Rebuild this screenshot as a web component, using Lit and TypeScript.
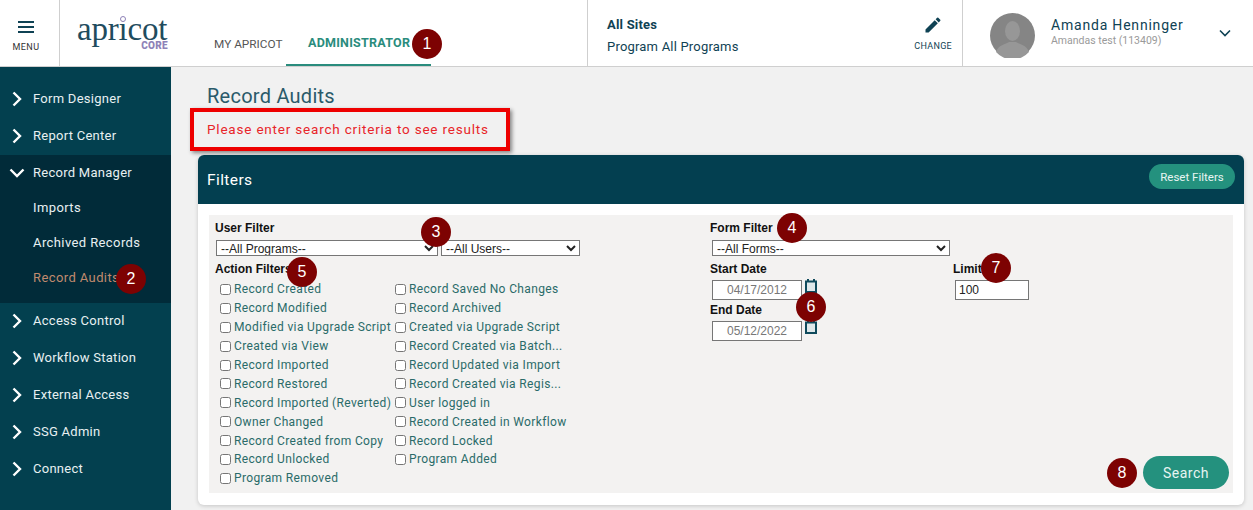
import { css, html, LitElement } from "lit";
import { customElement } from "lit/decorators.js";

const col1 = ["Record Created", "Record Modified", "Modified via Upgrade Script", "Created via View", "Record Imported", "Record Restored", "Record Imported (Reverted)", "Owner Changed", "Record Created from Copy", "Record Unlocked", "Program Removed"];
const col2 = ["Record Saved No Changes", "Record Archived", "Created via Upgrade Script", "Record Created via Batch...", "Record Updated via Import", "Record Created via Regis...", "User logged in", "Record Created in Workflow", "Record Locked", "Program Added"];

const chevronRight = html`<svg width="12" height="16" viewBox="0 0 12 16"><path d="M2.5 1.5 9 8l-6.500 6.500" fill="none" stroke="#fff" stroke-width="2.400"/></svg>`;
const chevronDown = html`<svg width="16" height="12" viewBox="0 0 16 12"><path d="M1.500 2.500 8 9l6.500-6.500" fill="none" stroke="#fff" stroke-width="2.400"/></svg>`;
const calendar = html`<svg class="cal" width="12" height="14" viewBox="0 0 12 14"><path d="M3 0v3M9 0v3" stroke="#0f4a5c" stroke-width="2"/><rect x="1" y="2.500" width="10" height="10.500" fill="#dfe8ea" stroke="#0f4a5c" stroke-width="2"/></svg>`;

@customElement("app-root")
export class AppRoot extends LitElement {
    private navItem(label: string) {
        return html`<div class="nav-item">${chevronRight}<span>${label}</span></div>`;
    }

    private check(label: string) {
        return html`<label class="check"><input type="checkbox" /><span>${label}</span></label>`;
    }

    protected override render() {
        return html`
            <header class="top">
                <div class="menu">
                    <svg width="16" height="12" viewBox="0 0 16 12"><path d="M0 1h16M0 6h16M0 11h16" stroke="#0f4254" stroke-width="2"/></svg>
                    <span>MENU</span>
                </div>
                <div class="logo">
                    <span class="logo-name">apricot</span>
                    <span class="logo-dot"></span>
                    <span class="logo-core">CORE</span>
                </div>
                <nav class="tabs">
                    <div class="tab">MY APRICOT</div>
                    <div class="tab active">ADMINISTRATOR</div>
                </nav>
                <div class="sites">
                    <div class="sites-text">
                        <b>All Sites</b>
                        <span>Program All Programs</span>
                    </div>
                    <div class="change">
                        <svg width="20" height="20" viewBox="0 0 24 24"><path fill="#0f4254" d="M3 17.250V21h3.750L17.810 9.940l-3.750-3.750L3 17.250zM20.710 7.040a1 1 0 0 0 0-1.410l-2.340-2.340a1 1 0 0 0-1.410 0l-1.830 1.830 3.750 3.750 1.830-1.830z"/></svg>
                        <span>CHANGE</span>
                    </div>
                </div>
                <div class="user">
                    <svg class="avatar" width="45" height="45" viewBox="0 0 45 45">
                        <circle cx="22.500" cy="22.500" r="22.500" fill="#858585"/>
                        <ellipse cx="22.500" cy="18" rx="7.500" ry="10" fill="#979797"/>
                        <path d="M6 39c2-7 10-8 13-10h7c3 2 11 3 13 10a22 22 0 0 1-33 0z" fill="#979797"/>
                    </svg>
                    <div class="user-text">
                        <div class="user-name">Amanda Henninger</div>
                        <div class="user-sub">Amandas test (113409)</div>
                    </div>
                    <svg class="user-chev" width="12" height="8" viewBox="0 0 12 8"><path d="M1 1.500 6 6.500l5-5" fill="none" stroke="#0f4254" stroke-width="1.600"/></svg>
                </div>
            </header>
            <div class="body">
                <aside class="side">
                    ${this.navItem("Form Designer")}
                    ${this.navItem("Report Center")}
                    <div class="group">
                        <div class="nav-item open">${chevronDown}<span>Record Manager</span></div>
                        <div class="sub">Imports</div>
                        <div class="sub">Archived Records</div>
                        <div class="sub current">Record Audits</div>
                    </div>
                    ${this.navItem("Access Control")}
                    ${this.navItem("Workflow Station")}
                    ${this.navItem("External Access")}
                    ${this.navItem("SSG Admin")}
                    ${this.navItem("Connect")}
                </aside>
                <main class="main">
                    <h1>Record Audits</h1>
                    <div class="message">Please enter search criteria to see results</div>
                    <section class="card">
                        <div class="card-head">
                            <span>Filters</span>
                            <button class="reset">Reset Filters</button>
                        </div>
                        <div class="card-body">
                            <div class="panel">
                                <div class="left">
                                    <div class="lbl">User Filter</div>
                                    <div class="selects">
                                        <select class="programs"><option>--All Programs--</option></select>
                                        <select class="users"><option>--All Users--</option></select>
                                    </div>
                                    <div class="lbl action">Action Filters</div>
                                    <div class="checks">
                                        <div>${col1.map((c) => this.check(c))}</div>
                                        <div>${col2.map((c) => this.check(c))}</div>
                                    </div>
                                </div>
                                <div class="right">
                                    <div class="lbl">Form Filter</div>
                                    <select class="forms"><option>--All Forms--</option></select>
                                    <div class="dates">
                                        <div class="date-col">
                                            <div class="lbl">Start Date</div>
                                            <div class="date-row"><input class="date" value="04/17/2012" />${calendar}</div>
                                            <div class="lbl end">End Date</div>
                                            <div class="date-row"><input class="date" value="05/12/2022" />${calendar}</div>
                                        </div>
                                        <div>
                                            <div class="lbl">Limit</div>
                                            <input class="limit" value="100" />
                                        </div>
                                    </div>
                                </div>
                                <button class="search">Search</button>
                            </div>
                        </div>
                    </section>
                </main>
            </div>
            <div class="highlight"></div>
            ${[[427, 44, "1"], [131, 279, "2"], [436, 232, "3"], [792, 228, "4"], [302, 272, "5"], [811, 307, "6"], [996, 268, "7"], [1122, 473, "8"]].map(
                ([x, y, n]) => html`<div class="badge" style="left:${(x as number) - 15}px;top:${(y as number) - 15}px">${n}</div>`
            )}
        `;
    }

    static styles = css`
        :host {
            display: block;
            position: relative;
            width: 1253px;
            height: 510px;
            overflow: hidden;
            background: #f1f1f1;
            font-family: Roboto, "Liberation Sans", sans-serif;
            color: #0f4254;
        }

        * {
            box-sizing: border-box;
        }

        /* top bar */
        .top {
            display: flex;
            height: 67px;
            background: #fff;
            border-bottom: 1px solid #cfcfcf;
        }

        .menu {
            width: 60px;
            border-right: 1px solid #cfcfcf;
            display: flex;
            flex-direction: column;
            align-items: center;
            padding: 21px 7px 0 0;
            gap: 9px;
            font-size: 9px;
            letter-spacing: 0.5px;
            color: #333;
        }

        .logo {
            position: relative;
            width: 154px;
        }

        .logo-name {
            position: absolute;
            left: 17px;
            top: 17px;
            font-family: "Liberation Serif", serif;
            font-size: 33px;
            line-height: 24px;
            color: #1f4c5e;
            letter-spacing: -0.2px;
        }

        .logo-dot {
            position: absolute;
            left: 60px;
            top: 16px;
            width: 6px;
            height: 6px;
            border-radius: 50%;
            background: #fff;
            border: 1.500px solid #8e82b8;
        }

        .logo-core {
            position: absolute;
            right: 46px;
            top: 41px;
            font-size: 10px;
            line-height: 10px;
            font-weight: 900;
            letter-spacing: 0.3px;
            color: #8e82b8;
        }

        .tabs {
            width: 374px;
            display: flex;
            border-right: 1px solid #cfcfcf;
        }

        .tab {
            width: 72px;
            height: 66px;
            padding-top: 21px;
            display: flex;
            align-items: center;
            font-size: 11.800px;
            color: #555;
            white-space: nowrap;
        }

        .tab.active {
            width: 145px;
            padding-left: 22px;
            font-size: 12.500px;
            letter-spacing: 0.25px;
            font-weight: 700;
            color: #2a8c7d;
            border-bottom: 2px solid #2a8c7d;
        }

        .sites {
            width: 375px;
            display: flex;
            justify-content: space-between;
            padding: 0 10px 0 19px;
            border-right: 1px solid #cfcfcf;
        }

        .sites-text {
            display: flex;
            flex-direction: column;
            padding-top: 17px;
            gap: 7px;
            font-size: 13px;
            line-height: 15px;
            letter-spacing: 0.2px;
        }

        .sites-text b {
            font-size: 13px;
        }

        .change {
            display: flex;
            flex-direction: column;
            align-items: center;
            padding-top: 15px;
            gap: 6px;
            font-size: 9px;
            letter-spacing: 0.3px;
        }

        .user {
            flex: 1;
            display: flex;
            align-items: center;
            padding-left: 27px;
        }

        .avatar {
            flex: none;
            margin-top: 5px;
        }

        .user-text {
            margin: -4px 0 0 16px;
            width: 166px;
        }

        .user-name {
            font-size: 14px;
            line-height: 18px;
            letter-spacing: 0.8px;
        }

        .user-sub {
            font-size: 10.500px;
            line-height: 13px;
            color: #9a9a9a;
        }

        .user-chev {
            margin-left: 2px;
        }

        /* sidebar */
        .body {
            display: flex;
            height: 443px;
        }

        .side {
            width: 171px;
            flex: none;
            background: #03404f;
            padding-top: 13px;
            color: #e8f0f2;
            font-size: 13px;
            letter-spacing: 0.27px;
        }

        .nav-item {
            height: 37px;
            display: flex;
            align-items: center;
            padding-left: 9px;
        }

        .nav-item svg {
            width: 16px;
            flex: none;
        }

        .nav-item span {
            margin-left: 8px;
        }

        .group {
            background: #012b39;
            height: 148px;
            margin: 1px 0 -1px;
        }

        .group .nav-item {
            height: 35px;
        }

        .sub {
            height: 35px;
            line-height: 35px;
            padding-left: 33px;
            letter-spacing: 0.4px;
        }

        .sub.current {
            color: #c08a6e;
        }

        /* main */
        .main {
            flex: 1;
            padding: 17px 9px 0 27px;
        }

        h1 {
            margin: 0 0 0 9px;
            font-size: 20px;
            line-height: 24px;
            font-weight: 400;
            letter-spacing: 0.25px;
            color: #2a5a6a;
        }

        .message {
            margin: 11px 0 0 9px;
            font-size: 13.500px;
            line-height: 20px;
            letter-spacing: 0.8px;
            color: #e8252a;
        }

        .card {
            margin-top: 16px;
            height: 350px;
            background: #fff;
            border-radius: 6px;
            box-shadow: 0 1px 4px rgba(0, 0, 0, 0.18);
            overflow: hidden;
        }

        .card-head {
            height: 49px;
            background: #033f50;
            display: flex;
            align-items: center;
            justify-content: space-between;
            padding: 0 9px;
            color: #fff;
            font-size: 15.500px;
            letter-spacing: 0.4px;
        }

        .reset {
            width: 86px;
            height: 25px;
            margin-top: -6px;
            border: none;
            border-radius: 13px;
            background: #24917e;
            color: #e8f5f2;
            font: inherit;
            font-size: 11.500px;
            letter-spacing: 0;
            padding: 0;
        }

        .card-body {
            padding: 11px 11px 0;
        }

        .panel {
            position: relative;
            height: 278px;
            background: #f3f2f1;
            display: flex;
            padding-top: 6px;
        }

        .left {
            width: 501px;
            flex: none;
            padding-left: 6px;
        }

        .lbl {
            font-family: "Liberation Sans", sans-serif;
            font-weight: 700;
            font-size: 12px;
            line-height: 14px;
            color: #111;
        }

        select,
        input.date,
        input.limit {
            font-family: "Liberation Sans", sans-serif;
            font-size: 12px;
            background: #fff;
            border: 1px solid #767676;
            border-radius: 0;
            color: #222;
            outline: none;
        }

        select {
            display: block;
            height: 16px;
            padding: 0;
        }

        .selects {
            display: flex;
            gap: 3px;
            margin: 5px 0 0 1px;
        }

        .programs {
            width: 222px;
        }

        .users {
            width: 139px;
        }

        .action {
            margin-top: 6px;
        }

        .checks {
            display: flex;
            margin: 4px 0 0 5px;
        }

        .checks > div {
            width: 175px;
        }

        .check {
            display: flex;
            align-items: center;
            height: 18.900px;
            font-size: 12px;
            letter-spacing: 0.36px;
            color: #2a6b69;
            white-space: nowrap;
        }

        .check input {
            width: 11px;
            height: 11px;
            margin: 0 3px 0 0;
            flex: none;
        }

        .right {
            flex: 1;
        }

        .forms {
            width: 238px;
            margin: 5px 0 0 2px;
        }

        .dates {
            display: flex;
            margin-top: 6px;
        }

        .date-col {
            width: 243px;
        }

        .date-row {
            display: flex;
            align-items: flex-start;
            margin: 4px 0 0 2px;
        }

        .date {
            width: 90px;
            height: 20px;
            padding: 0;
            text-align: center;
            color: #777 !important;
        }

        .cal {
            margin: -1px 0 0 3px;
        }

        .end {
            margin-top: 3px;
        }

        .limit {
            display: block;
            width: 74px;
            height: 20px;
            margin: 4px 0 0 2px;
            padding: 0 3px;
        }

        .search {
            position: absolute;
            right: 4px;
            bottom: 4px;
            width: 86px;
            height: 33px;
            border: none;
            border-radius: 17px;
            background: #24917e;
            color: #e8f5f2;
            font: inherit;
            font-size: 14px;
            letter-spacing: 0.5px;
            padding: 0;
        }

        /* annotations over the screenshot */
        .highlight {
            position: absolute;
            left: 190px;
            top: 108px;
            width: 320px;
            height: 43px;
            border: 4px solid #ee0000;
            box-shadow: 2px 2px 4px rgba(0, 0, 0, 0.45);
        }

        .badge {
            position: absolute;
            width: 30px;
            height: 30px;
            border-radius: 50%;
            background: #7d0202;
            color: #fff;
            font-family: "Liberation Sans", sans-serif;
            font-size: 16px;
            line-height: 30px;
            text-align: center;
        }
    `;
}

declare global {
    interface HTMLElementTagNameMap {
        "app-root": AppRoot;
    }
}
